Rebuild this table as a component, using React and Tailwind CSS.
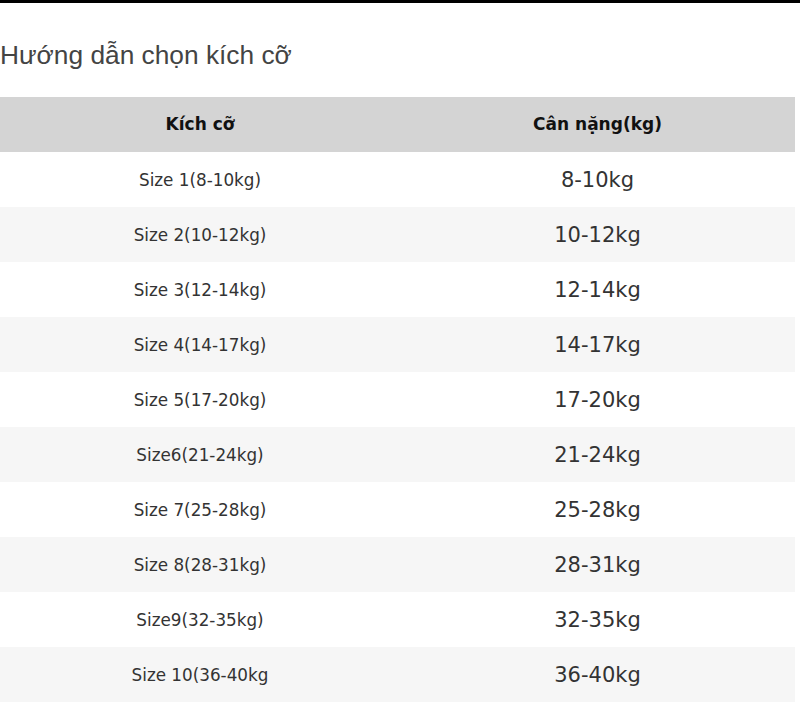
const rows = [
  ['Size 1(8-10kg)', '8-10kg'],
  ['Size 2(10-12kg)', '10-12kg'],
  ['Size 3(12-14kg)', '12-14kg'],
  ['Size 4(14-17kg)', '14-17kg'],
  ['Size 5(17-20kg)', '17-20kg'],
  ['Size6(21-24kg)', '21-24kg'],
  ['Size 7(25-28kg)', '25-28kg'],
  ['Size 8(28-31kg)', '28-31kg'],
  ['Size9(32-35kg)', '32-35kg'],
  ['Size 10(36-40kg', '36-40kg'],
]

export default function App() {
  return (
    <div className="w-[800px] h-[727px] bg-white overflow-hidden">
      <div className="h-[3px] bg-black" />
      <h1 className="pt-[36px] mb-[26px] text-[26.3px] leading-[32px] text-[#444] font-normal" style={{ fontFamily: '"Liberation Sans", Arial, sans-serif' }}>
        Hướng dẫn chọn kích cỡ
      </h1>
      <table className="w-[795px] table-fixed border-collapse" style={{ fontFamily: '"DejaVu Sans", Verdana, sans-serif' }}>
        <thead>
          <tr className="h-[55px] bg-[#d4d4d4]">
            <th className="w-[400px] text-[17px] font-bold text-[#111] text-center">Kích cỡ</th>
            <th className="text-[17px] font-bold text-[#111] text-center">Cân nặng(kg)</th>
          </tr>
        </thead>
        <tbody>
          {rows.map(([size, kg], i) => (
            <tr key={size} className={i % 2 === 1 ? 'h-[55px] bg-[#f6f6f6]' : 'h-[55px] bg-white'}>
              <td className="text-center text-[16.8px] text-[#333] pt-[2px]">{size}</td>
              <td className="text-center text-[21px] text-[#333] pt-[2px]">{kg}</td>
            </tr>
          ))}
        </tbody>
      </table>
    </div>
  )
}
